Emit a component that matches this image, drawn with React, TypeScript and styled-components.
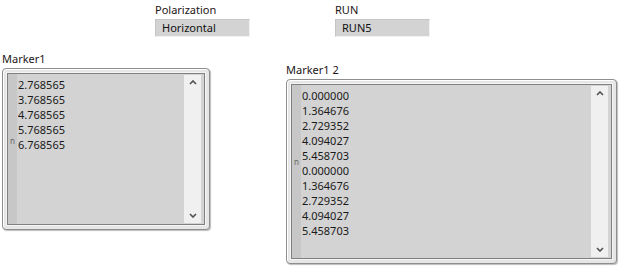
import React from 'react'
import styled, { createGlobalStyle } from 'styled-components'

const GlobalStyle = createGlobalStyle`
  html, body {
    margin: 0;
    padding: 0;
    background: #ffffff;
  }
  body {
    font-family: 'Noto Sans', 'Open Sans', sans-serif;
    font-size: 11px;
    color: #1a1a1a;
  }
`

// front panel is a free canvas: controls sit where the user dropped them
const Panel = styled.div`
  position: relative;
  width: 622px;
  height: 270px;
  overflow: hidden;
`

const Control = styled.div<{ $x: number; $y: number }>`
  position: absolute;
  left: ${p => p.$x}px;
  top: ${p => p.$y}px;
  display: flex;
  flex-direction: column;
`

const Label = styled.div`
  font-size: 11px;
  line-height: 15px;
  height: 15px;
  margin-bottom: 2px;
  color: #1c1416;
  white-space: nowrap;
`

const StringField = styled.div`
  width: 95px;
  height: 18px;
  box-sizing: border-box;
  padding-left: 6px;
  background: #d3d3d3;
  border-top: 1px solid #c6c6c6;
  border-left: 1px solid #c6c6c6;
  border-right: 1px solid #f2f2f2;
  border-bottom: 1px solid #f2f2f2;
  line-height: 16px;
  font-size: 11px;
  color: #111;
`

const Frame = styled.div<{ $w: number; $h: number }>`
  width: ${p => p.$w}px;
  height: ${p => p.$h}px;
  box-sizing: border-box;
  padding: 4px;
  background: #e6e6e6;
  border: 1px solid #8e8e8e;
  border-radius: 4px;
  box-shadow: inset 1px 1px 0 #ffffff, 1px 1px 1px #bdbdbd;
  display: flex;
`

const Well = styled.div`
  flex: 1;
  display: flex;
  border: 1px solid #808080;
  box-shadow: 0 0 0 1px #f4f4f4;
  background: #d3d3d3;
  overflow: hidden;
`

const Gutter = styled.div`
  width: 9px;
  background: #c7c7c7;
  position: relative;
`

const IndexMark = styled.span<{ $top: number }>`
  position: absolute;
  left: 2px;
  top: ${p => p.$top}px;
  font-size: 8px;
  line-height: 8px;
  color: #666;
`

const List = styled.div`
  flex: 1;
  padding: 3px 0 0 1px;
`

const Row = styled.div`
  height: 15px;
  line-height: 15px;
  font-size: 11px;
  color: #1a1a1a;
`

const ScrollBar = styled.div`
  width: 17px;
  margin: 1px 3px 1px 0;
  background: #f0f0f0;
  display: flex;
  flex-direction: column;
  justify-content: space-between;
  align-items: center;
  padding: 5px 0;
`

const Arrow = ({ down }: { down?: boolean }) => (
  <svg width="8" height="5" viewBox="0 0 8 5">
    <polyline
      points={down ? '1,1 4,4 7,1' : '1,4 4,1 7,4'}
      fill="none"
      stroke="#505050"
      strokeWidth="1.6"
    />
  </svg>
)

const marker1 = ['2.768565', '3.768565', '4.768565', '5.768565', '6.768565']
const marker2 = [
  '0.000000',
  '1.364676',
  '2.729352',
  '4.094027',
  '5.458703',
  '0.000000',
  '1.364676',
  '2.729352',
  '4.094027',
  '5.458703',
]

function ListBox({
  w,
  h,
  items,
  markTop,
}: {
  w: number
  h: number
  items: string[]
  markTop: number
}) {
  return (
    <Frame $w={w} $h={h}>
      <Well>
        <Gutter>
          <IndexMark $top={markTop}>n</IndexMark>
        </Gutter>
        <List>
          {items.map((v, i) => (
            <Row key={i}>{v}</Row>
          ))}
        </List>
        <ScrollBar>
          <Arrow />
          <Arrow down />
        </ScrollBar>
      </Well>
    </Frame>
  )
}

export default function App() {
  return (
    <>
      <GlobalStyle />
      <Panel>
        <Control $x={155} $y={2}>
          <Label>Polarization</Label>
          <StringField>Horizontal</StringField>
        </Control>
        <Control $x={335} $y={2}>
          <Label>RUN</Label>
          <StringField>RUN5</StringField>
        </Control>
        <Control $x={2} $y={51}>
          <Label>Marker1</Label>
          <ListBox w={208} h={162} items={marker1} markTop={63} />
        </Control>
        <Control $x={286} $y={62}>
          <Label>Marker1 2</Label>
          <ListBox w={331} h={185} items={marker2} markTop={73} />
        </Control>
      </Panel>
    </>
  )
}
